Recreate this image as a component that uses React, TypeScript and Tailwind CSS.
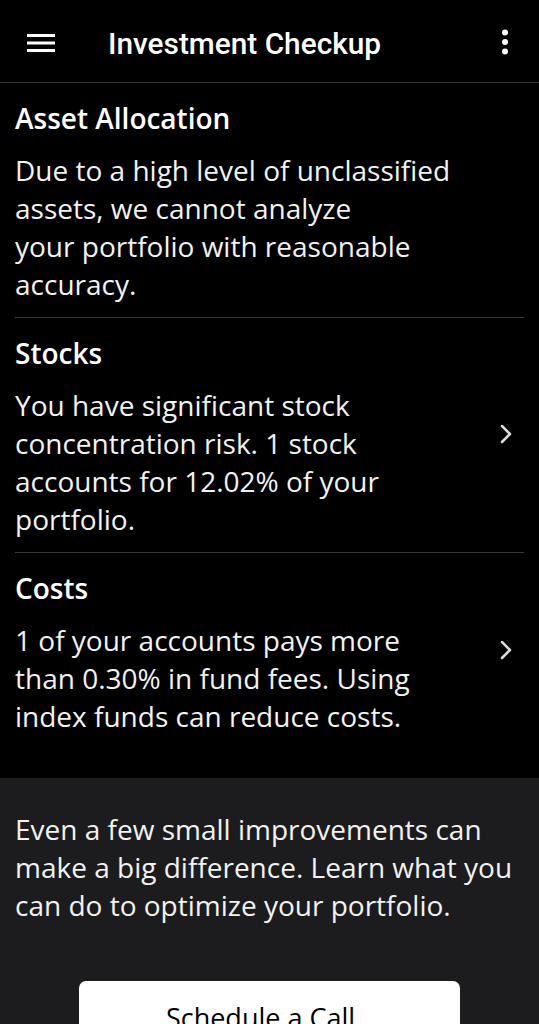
import { ChevronRight } from "lucide-react";

const sans = { fontFamily: '"Open Sans", "Noto Sans", sans-serif' };

function Section({
  title,
  lines,
  chevron,
  divider,
}: {
  title: string;
  lines: string[];
  chevron?: boolean;
  divider?: boolean;
}) {
  return (
    <div className={divider ? "mx-[15px] border-b border-[#3a3a3a]" : "mx-[15px]"}>
      <div className="flex items-center pt-[17px] pb-[14px]">
        <div className="flex-1">
          <div className="text-[28px] leading-[36px] font-semibold text-white">{title}</div>
          <div className="mt-[15px] text-[28px] leading-[38px] text-[#f2f2f2]">
            {lines.map((l, i) => (
              <div key={i}>{l}</div>
            ))}
          </div>
        </div>
        {chevron && (
          <ChevronRight className="w-[32px] h-[32px] text-[#dcdcdc] mr-[2px] mt-[-6px]" strokeWidth={1.9} />
        )}
      </div>
    </div>
  );
}

export default function App() {
  return (
    <div className="w-[539px] h-[1024px] overflow-hidden bg-black text-white" style={sans}>
      <header className="h-[83px] flex items-center border-b border-[#333] pl-[26px] pr-[30px]">
        <svg width="30" height="20" viewBox="0 0 30 20" className="shrink-0 mt-[3px]">
          <rect x="1" y="1" width="28" height="3" fill="#fff" />
          <rect x="1" y="8.5" width="28" height="3" fill="#fff" />
          <rect x="1" y="16" width="28" height="3" fill="#fff" />
        </svg>
        <h1
          className="ml-[52px] flex-1 text-[29.8px] font-medium mt-[6px]"
          style={{ fontFamily: 'Roboto, "Liberation Sans", sans-serif' }}
        >
          Investment Checkup
        </h1>
        <svg width="8" height="26" viewBox="0 0 8 26" className="mt-[2px]">
          <circle cx="4" cy="3.5" r="3" fill="#fff" />
          <circle cx="4" cy="13" r="3" fill="#fff" />
          <circle cx="4" cy="22.5" r="3" fill="#fff" />
        </svg>
      </header>

      <Section
        title="Asset Allocation"
        lines={[
          "Due to a high level of unclassified",
          "assets, we cannot analyze",
          "your portfolio with reasonable",
          "accuracy.",
        ]}
        divider
      />
      <Section
        title="Stocks"
        lines={[
          "You have significant stock",
          "concentration risk. 1 stock",
          "accounts for 12.02% of your",
          "portfolio.",
        ]}
        chevron
        divider
      />
      <Section
        title="Costs"
        lines={[
          "1 of your accounts pays more",
          "than 0.30% in fund fees. Using",
          "index funds can reduce costs.",
        ]}
        chevron
      />
      <div className="h-[29px]" />

      <div className="bg-[#1c1c1e] px-[15px] pt-[32px] pb-[40px]">
        <p className="text-[28px] leading-[38px] text-[#f2f2f2]">
          Even a few small improvements can
          <br />
          make a big difference. Learn what you
          <br />
          can do to optimize your portfolio.
        </p>
        <div className="mt-[57px] flex justify-center">
          <button className="w-[381px] h-[64px] rounded-[7px] bg-white text-black text-[27px] pt-[10px] pr-[18px]">
            Schedule a Call
          </button>
        </div>
      </div>
    </div>
  );
}
